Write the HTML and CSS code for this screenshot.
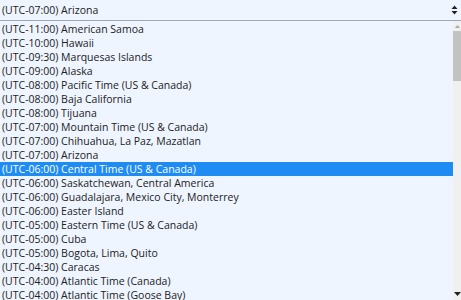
FILE: index.html
```html
<!DOCTYPE html>
<html>
<head>
<meta charset="utf-8">
<link rel="stylesheet" href="styles.css">
</head>
<body>
<div class="select">
  <span class="value">(UTC-07:00) Arizona</span>
  <svg class="arrows" width="7" height="10" viewBox="0 0 7 10"><path d="M3.5 0.5 L6.5 4 L0.5 4 Z M3.5 9.5 L6.5 6 L0.5 6 Z" fill="#222"/></svg>
</div>
<div class="dropdown">
  <ul class="list">
    <li>(UTC-11:00) American Samoa</li>
    <li>(UTC-10:00) Hawaii</li>
    <li>(UTC-09:30) Marquesas Islands</li>
    <li>(UTC-09:00) Alaska</li>
    <li>(UTC-08:00) Pacific Time (US &amp; Canada)</li>
    <li>(UTC-08:00) Baja California</li>
    <li>(UTC-08:00) Tijuana</li>
    <li>(UTC-07:00) Mountain Time (US &amp; Canada)</li>
    <li>(UTC-07:00) Chihuahua, La Paz, Mazatlan</li>
    <li>(UTC-07:00) Arizona</li>
    <li class="selected">(UTC-06:00) Central Time (US &amp; Canada)</li>
    <li>(UTC-06:00) Saskatchewan, Central America</li>
    <li>(UTC-06:00) Guadalajara, Mexico City, Monterrey</li>
    <li>(UTC-06:00) Easter Island</li>
    <li>(UTC-05:00) Eastern Time (US &amp; Canada)</li>
    <li>(UTC-05:00) Cuba</li>
    <li>(UTC-05:00) Bogota, Lima, Quito</li>
    <li>(UTC-04:30) Caracas</li>
    <li>(UTC-04:00) Atlantic Time (Canada)</li>
    <li>(UTC-04:00) Atlantic Time (Goose Bay)</li>
  </ul>
  <div class="scrollbar">
    <svg class="sb-up" width="5" height="3" viewBox="0 0 5 3"><path d="M2.5 0 L5 3 L0 3 Z" fill="#a8a8a8"/></svg>
    <div class="thumb"></div>
    <div class="sb-fill"></div>
    <svg class="sb-down" width="7" height="4" viewBox="0 0 7 4"><path d="M0 0 L7 0 L3.5 4 Z" fill="#222"/></svg>
  </div>
</div>
</body>
</html>
```

FILE: styles.css
```css
html, body {
  margin: 0;
  padding: 0;
  background: #eef5ff;
  width: 461px;
  height: 300px;
  overflow: hidden;
  font-family: "Open Sans", "Noto Sans", sans-serif;
  font-size: 10.5px;
  color: #222;
}
.select {
  height: 20px;
  display: flex;
  align-items: center;
  justify-content: space-between;
  padding: 0 3px 0 2px;
  border-bottom: 1px solid #9fa8b4;
}
.value {
  line-height: 20px;
}
.arrows {
  display: block;
}
.dropdown {
  display: flex;
  height: 279px;
  overflow: hidden;
}
.list {
  list-style: none;
  margin: 0;
  padding: 1px 0 0 0;
  flex: 1;
}
.list li {
  height: 14px;
  line-height: 14px;
  padding-left: 2px;
  white-space: nowrap;
}
.list li.selected {
  background: #1f8cf4;
  color: #fff;
}
.scrollbar {
  width: 8px;
  background: #f0f0f0;
  display: flex;
  flex-direction: column;
  align-items: center;
  padding-top: 4px;
}
.sb-up {
  display: block;
  margin-bottom: 3px;
}
.thumb {
  width: 8px;
  height: 50px;
  background: #c2c2c2;
}
.sb-fill {
  flex: 1;
}
.sb-down {
  display: block;
  margin-bottom: 4px;
}
```
